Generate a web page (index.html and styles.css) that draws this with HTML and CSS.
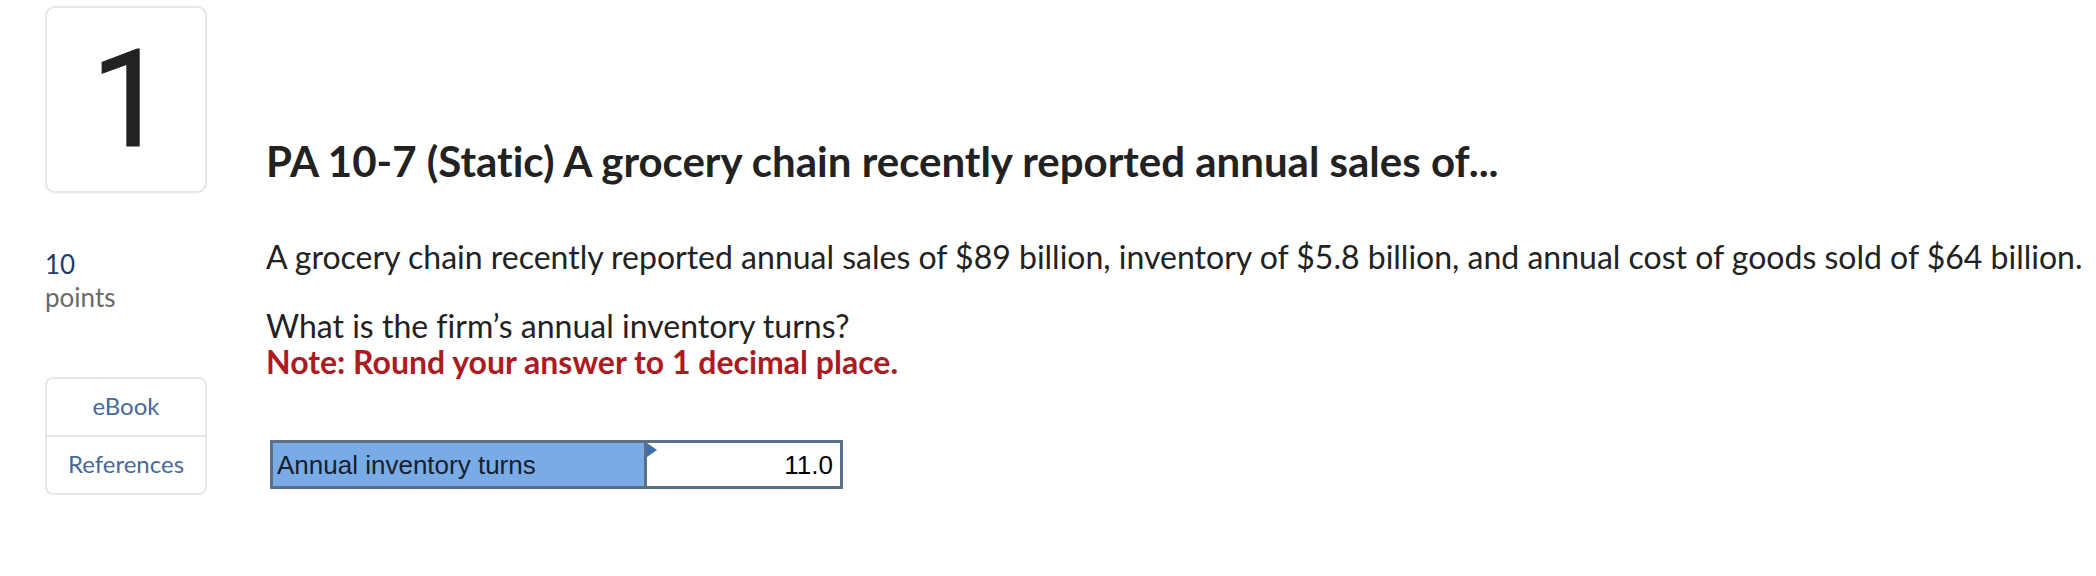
FILE: index.html
```html
<!DOCTYPE html>
<html lang="en">
<head>
<meta charset="utf-8">
<title>PA 10-7 (Static)</title>
<link rel="stylesheet" href="styles.css">
</head>
<body>
<div class="question">
  <aside class="sidebar">
    <div class="q-number">1</div>
    <div class="points">
      <div class="points-value">10</div>
      <div class="points-label">points</div>
    </div>
    <nav class="resources">
      <a class="resource-link" href="#">eBook</a>
      <a class="resource-link" href="#">References</a>
    </nav>
  </aside>
  <main class="content">
    <h1 class="q-title">PA 10-7 (Static) A grocery chain recently reported annual sales of...</h1>
    <p class="q-text">A grocery chain recently reported annual sales of $89 billion, inventory of $5.8 billion, and annual cost of goods sold of $64 billion.</p>
    <p class="q-ask">What is the firm’s annual inventory turns?<br><strong class="q-note">Note: Round your answer to 1 decimal place.</strong></p>
    <div class="answer-table">
      <div class="answer-label">Annual inventory turns</div>
      <div class="answer-value"><span class="answer-flag"></span>11.0</div>
    </div>
  </main>
</div>
</body>
</html>
```
FILE: styles.css
```css
* { box-sizing: border-box; }
html, body { margin: 0; padding: 0; background: #fff; }
body {
  font-family: "Lato", "Noto Sans", sans-serif;
  color: #222;
  font-variant-ligatures: none;
  font-feature-settings: "liga" 0, "clig" 0;
}

.question {
  display: flex;
  padding-left: 45px;
  padding-top: 6px;
}

.sidebar {
  width: 162px;
  flex: none;
  display: flex;
  flex-direction: column;
}

.q-number {
  height: 187px;
  border: 2px solid #e7e7e7;
  border-radius: 10px;
  box-shadow: 0 1px 2px rgba(0,0,0,0.04);
  font-family: "Roboto", sans-serif;
  font-weight: 400;
  font-size: 136px;
  line-height: 136px;
  color: #222;
  text-align: center;
  padding-top: 24px;
  padding-left: 6px;
  -webkit-text-stroke: 1px #222;
}

.points {
  margin-top: 55px;
  font-size: 26px;
  line-height: 33px;
}
.points-value { color: #1d3b6a; }
.points-label { color: #6a6a6a; }

.resources {
  margin-top: 63px;
  border: 2px solid #e7e7e7;
  border-radius: 8px;
  display: flex;
  flex-direction: column;
}
.resource-link {
  height: 56px;
  display: flex;
  align-items: center;
  justify-content: center;
  font-size: 24px;
  color: #47699a;
  text-decoration: none;
  padding-bottom: 3px;
}
.resource-link + .resource-link { border-top: 2px solid #e7e7e7; height: 58px; }

.content {
  margin-left: 59px;
  flex: 1;
}

.q-title {
  margin: 130px 0 0;
  font-size: 42px;
  line-height: 50px;
  font-weight: 700;
  color: #222;
  white-space: nowrap;
}

.q-text, .q-ask {
  margin: 0;
  font-size: 32px;
  line-height: 36px;
  white-space: nowrap;
}
.q-text { margin-top: 53px; }
.q-ask { margin-top: 33px; }
.q-note { color: #ad1a1f; font-weight: 700; }

.answer-table {
  margin-top: 60px;
  margin-left: 4px;
  display: flex;
  width: 573px;
  height: 49px;
  border: 3px solid #5b6f8a;
  font-family: "Liberation Sans", Arial, sans-serif;
  font-size: 26px;
}
.answer-label {
  width: 374px;
  background: #79ace6;
  border-right: 3px solid #5b6f8a;
  color: #16202e;
  display: flex;
  align-items: center;
  padding-left: 4px;
  padding-top: 1px;
}
.answer-value {
  position: relative;
  flex: 1;
  background: #fff;
  color: #000;
  display: flex;
  align-items: center;
  justify-content: flex-end;
  padding-right: 7px;
  padding-top: 1px;
}
.answer-flag {
  position: absolute;
  left: 0;
  top: 0;
  width: 0;
  height: 0;
  border-left: 10px solid #3e70ae;
  border-top: 7px solid transparent;
  border-bottom: 7px solid transparent;
}
```
